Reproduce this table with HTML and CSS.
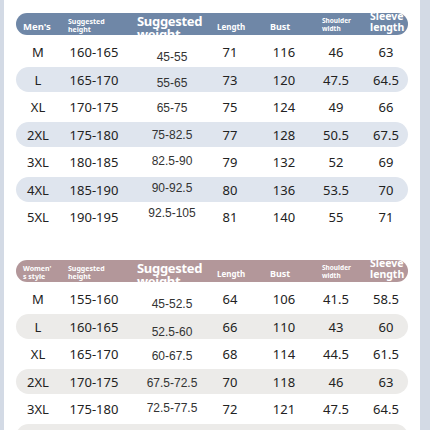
FILE: index.html
```html
<!DOCTYPE html>
<html lang="en">
<head>
  <meta charset="UTF-8">
  <meta name="viewport" content="width=device-width, initial-scale=1.0">
  <title>Size Chart</title>
  <link rel="stylesheet" href="styles.css">
</head>

<body>
  <div class="page">
    <!-- Men's chart -->
    <section class="chart men">
      <div class="head">
        <span class="h-size">Men's</span>
        <span class="h-small">Suggested<br>height</span>
        <span class="h-big">Suggested<br>weight</span>
        <span class="h-len">Length</span>
        <span class="h-bust">Bust</span>
        <span class="h-shoulder">Shoulder<br>width</span>
        <span class="h-sleeve">Sleeve<br>length</span>
      </div>
      <div class="row"><span>M</span><span>160-165</span><span class="wt">45-55</span><span>71</span><span>116</span><span>46</span><span>63</span></div>
      <div class="row"><span>L</span><span>165-170</span><span class="wt">55-65</span><span>73</span><span>120</span><span>47.5</span><span>64.5</span></div>
      <div class="row"><span>XL</span><span>170-175</span><span class="wt">65-75</span><span>75</span><span>124</span><span>49</span><span>66</span></div>
      <div class="row"><span>2XL</span><span>175-180</span><span class="wt">75-82.5</span><span>77</span><span>128</span><span>50.5</span><span>67.5</span></div>
      <div class="row"><span>3XL</span><span>180-185</span><span class="wt">82.5-90</span><span>79</span><span>132</span><span>52</span><span>69</span></div>
      <div class="row"><span>4XL</span><span>185-190</span><span class="wt">90-92.5</span><span>80</span><span>136</span><span>53.5</span><span>70</span></div>
      <div class="row"><span>5XL</span><span>190-195</span><span class="wt">92.5-105</span><span>81</span><span>140</span><span>55</span><span>71</span></div>
    </section>

    <!-- Women's chart -->
    <section class="chart women">
      <div class="head">
        <span class="h-style">Women'<br>s style</span>
        <span class="h-small">Suggested<br>height</span>
        <span class="h-big">Suggested<br>weight</span>
        <span class="h-len">Length</span>
        <span class="h-bust">Bust</span>
        <span class="h-shoulder">Shoulder<br>width</span>
        <span class="h-sleeve">Sleeve<br>length</span>
      </div>
      <div class="row"><span>M</span><span>155-160</span><span class="wt">45-52.5</span><span>64</span><span>106</span><span>41.5</span><span>58.5</span></div>
      <div class="row"><span>L</span><span>160-165</span><span class="wt">52.5-60</span><span>66</span><span>110</span><span>43</span><span>60</span></div>
      <div class="row"><span>XL</span><span>165-170</span><span class="wt">60-67.5</span><span>68</span><span>114</span><span>44.5</span><span>61.5</span></div>
      <div class="row"><span>2XL</span><span>170-175</span><span class="wt">67.5-72.5</span><span>70</span><span>118</span><span>46</span><span>63</span></div>
      <div class="row"><span>3XL</span><span>175-180</span><span class="wt">72.5-77.5</span><span>72</span><span>121</span><span>47.5</span><span>64.5</span></div>
      <div class="row"><span>4XL</span><span>180-185</span><span class="wt">77.5-82.5</span><span>74</span><span>125</span><span>49</span><span>66</span></div>
    </section>
  </div>
</body>
</html>
```

FILE: styles.css
```css
body {
  margin: 0;
  padding: 0;
  height: 430px;
  overflow: hidden;
  background-color: #d3dae5;
  font-family: 'Noto Sans', 'Liberation Sans', sans-serif;
}

.page {
  margin-left: 4px;
  width: 416px;
  height: 430px;
  background: #fff;
  padding: 13px 12px 0;
  box-sizing: border-box;
}

.chart {
  display: flex;
  flex-direction: column;
  gap: 2.5px;
}

.chart.women {
  margin-top: 30.5px;
}

/* Header pill */
.head {
  height: 22px;
  border-radius: 11px;
  margin-bottom: 2px;
  padding-left: 7px;
  overflow: hidden;
  display: grid;
  grid-template-columns: 45px 69px 80px 53px 52px 48px 1fr;
  align-items: center;
  color: #fff;
  font-weight: 700;
  white-space: nowrap;
}

.men .head {
  background-color: #6f87a7;
}

.women .head {
  background-color: #b3979a;
}

.h-size {
  font-size: 9.5px;
}

.h-style {
  font-size: 7px;
  line-height: 8px;
}

.h-small {
  font-size: 7px;
  line-height: 8px;
}

.h-big {
  font-size: 13px;
  line-height: 13px;
  letter-spacing: -0.3px;
  position: relative;
  top: 1.5px;
}

.h-len {
  font-size: 8px;
}

.h-bust {
  font-size: 9px;
}

.h-shoulder {
  font-size: 6.5px;
  line-height: 8.5px;
  position: relative;
  top: -1px;
}

.h-sleeve {
  font-size: 10.5px;
  line-height: 11px;
  position: relative;
  top: -4.5px;
}

/* Data rows */
.row {
  height: 25px;
  border-radius: 12.5px;
  padding-left: 16px;
  display: grid;
  grid-template-columns: 12px 100px 56px 60px 48px 56px 44px;
  color: #222;
  font-size: 13px;
}

.row span {
  display: flex;
  justify-content: center;
  align-items: center;
  white-space: nowrap;
}

.men .row:nth-child(odd) {
  background-color: #dfe5ee;
}

.women .row:nth-child(odd) {
  background-color: #ecebe9;
}

.row .wt {
  font-family: 'Liberation Sans', Arial, sans-serif;
  font-size: 12px;
  color: #333;
}

/* weight column drifts against the rows */
.men .row:nth-child(2) .wt { transform: translateY(5px); }
.men .row:nth-child(3) .wt { transform: translateY(2.5px); }
.men .row:nth-child(4) .wt { transform: translateY(1px); }
.men .row:nth-child(5) .wt { transform: translateY(-0.5px); }
.men .row:nth-child(6) .wt { transform: translateY(-1px); }
.men .row:nth-child(7) .wt { transform: translateY(-2.5px); }
.men .row:nth-child(8) .wt { transform: translateY(-4px); }

.women .row:nth-child(2) .wt { transform: translateY(5px); }
.women .row:nth-child(3) .wt { transform: translateY(4.5px); }
.women .row:nth-child(4) .wt { transform: translateY(2px); }
.women .row:nth-child(5) .wt { transform: translateY(1px); }
.women .row:nth-child(6) .wt { transform: translateY(-1px); }
.women .row:nth-child(7) .wt { transform: translateY(-2px); }
```
